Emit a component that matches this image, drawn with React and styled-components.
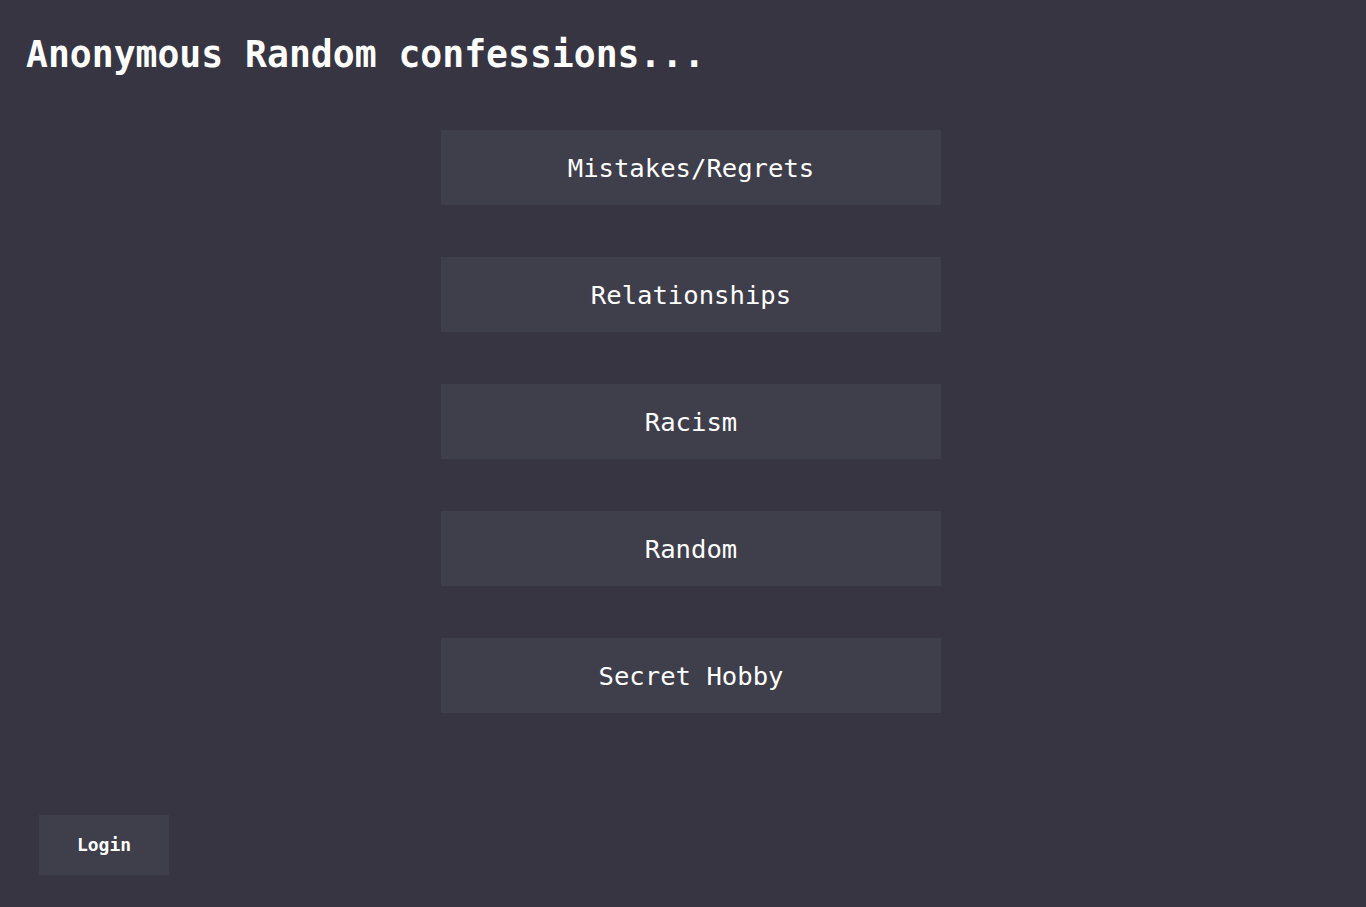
import React from "react";
import styled, { createGlobalStyle } from "styled-components";

const Global = createGlobalStyle`
  html, body { margin: 0; padding: 0; background: #363541; }
  body { font-family: "DejaVu Sans Mono", "Liberation Mono", monospace; color: #ffffff; }
  * { box-sizing: border-box; }
`;

const Page = styled.div`
  min-height: 100vh;
  display: flex;
  flex-direction: column;
  background: #363541;
`;

const Title = styled.h1`
  margin: 33px 0 0 26px;
  font-size: 36.4px;
  line-height: 44px;
  font-weight: bold;
  color: #ffffff;
`;

const CategoryList = styled.nav`
  display: flex;
  flex-direction: column;
  align-items: center;
  gap: 52px;
  margin-top: 53px;
  padding-left: 16px;
`;

const CategoryButton = styled.button`
  width: 500px;
  height: 75px;
  border: none;
  background: #3f3e4b;
  color: #ffffff;
  font-family: "DejaVu Sans Mono", "Liberation Mono", monospace;
  font-size: 25.6px;
  cursor: pointer;
  padding: 0;
`;

const Footer = styled.div`
  margin-top: auto;
  padding: 0 0 32px 39px;
`;

const LoginButton = styled.button`
  width: 130px;
  height: 60px;
  border: none;
  background: #3f3e4b;
  color: #ffffff;
  font-family: "DejaVu Sans Mono", "Liberation Mono", monospace;
  font-size: 18px;
  font-weight: bold;
  cursor: pointer;
  padding: 0 0 2px 0;
`;

const categories = ["Mistakes/Regrets", "Relationships", "Racism", "Random", "Secret Hobby"];

export default function App() {
  return (
    <>
      <Global />
      <Page>
        <Title>Anonymous Random confessions...</Title>
        <CategoryList>
          {categories.map((c) => (
            <CategoryButton key={c}>{c}</CategoryButton>
          ))}
        </CategoryList>
        <Footer>
          <LoginButton>Login</LoginButton>
        </Footer>
      </Page>
    </>
  );
}
